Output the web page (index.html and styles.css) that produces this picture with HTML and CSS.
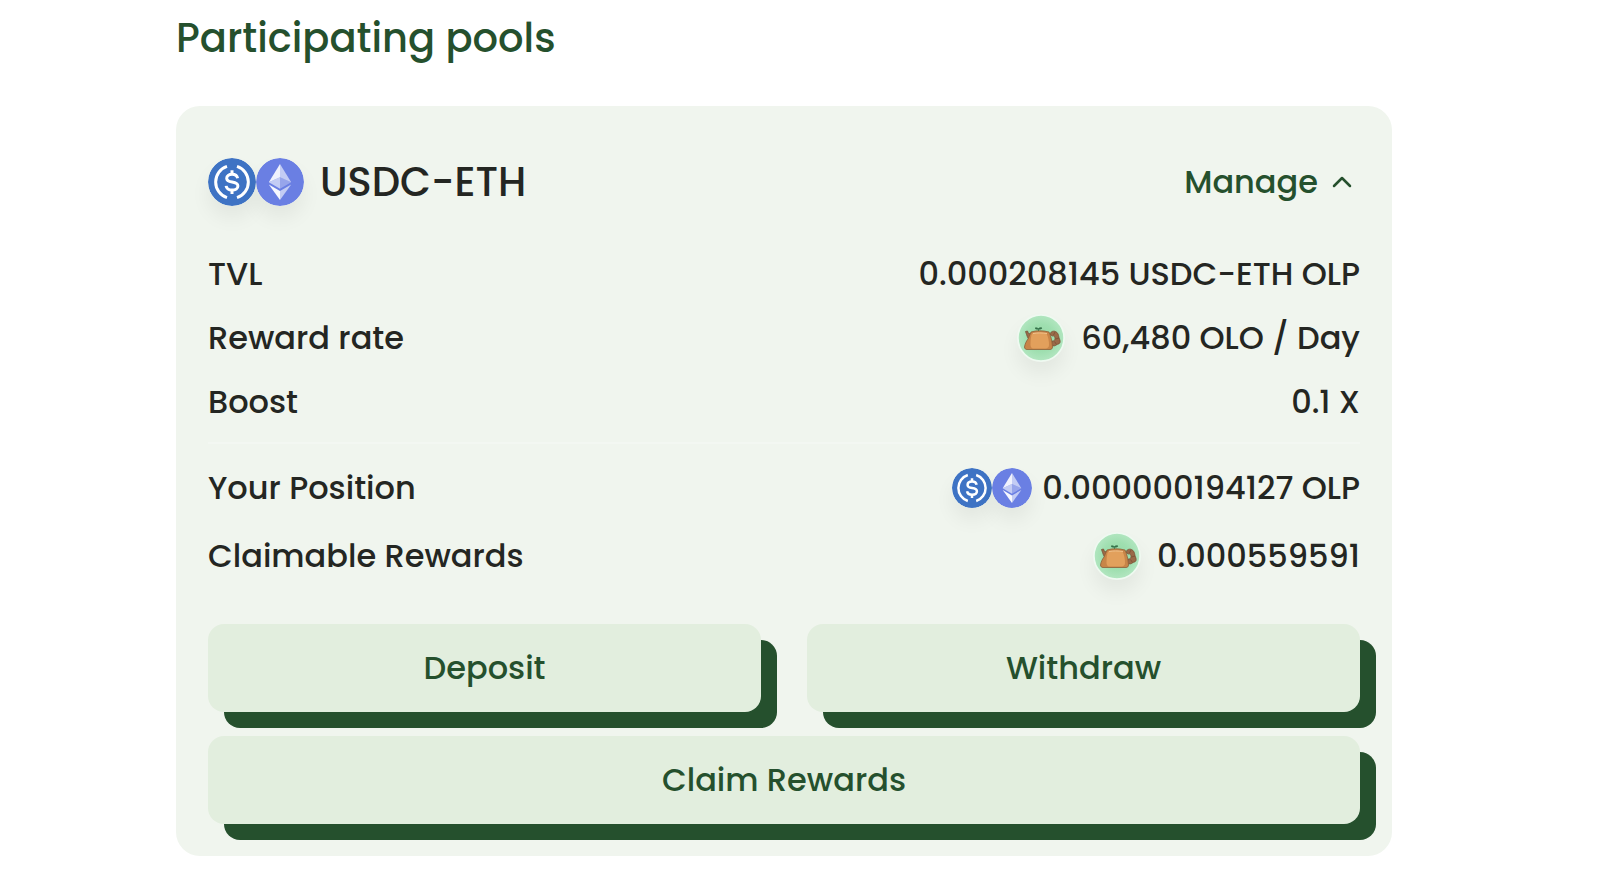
FILE: index.html
```html
<!DOCTYPE html>
<html lang="en">
<head>
    <meta charset="UTF-8">
    <meta name="viewport" content="width=device-width, initial-scale=1.0">
    <title>Participating pools</title>
    <link rel="stylesheet" href="styles.css">
</head>
<body>
    <!-- shared token icons -->
    <svg class="sprite" aria-hidden="true">
        <symbol id="usdc" viewBox="0 0 48 48">
            <circle cx="24" cy="24" r="24" fill="#3e73c4"/>
            <g fill="none" stroke="#fff" stroke-width="3">
                <path d="M19 8.4a16.4 16.4 0 0 0 0 31.200"/>
                <path d="M29 8.4a16.4 16.4 0 0 1 0 31.200"/>
                <path d="M29.600 20.200c-.5-2.600-2.500-3.900-5.500-3.900-3.200 0-5.400 1.600-5.400 4 0 2.300 1.700 3.200 5.400 3.800 4 .6 5.800 1.500 5.800 3.900 0 2.500-2.400 4.100-5.800 4.100-3.500 0-5.600-1.500-6-4.200"/>
                <path d="M24 12.300v4M24 32v4"/>
            </g>
        </symbol>
        <symbol id="eth" viewBox="0 0 48 48">
            <circle cx="24" cy="24" r="24" fill="#6a7fe3"/>
            <path fill="#fff" fill-opacity=".6" d="M24 6v13.300l11.200 5z"/>
            <path fill="#fff" fill-opacity=".9" d="M24 6L12.800 24.300l11.200-5z"/>
            <path fill="#fff" fill-opacity=".6" d="M24 32.900v9l11.200-15.500z"/>
            <path fill="#fff" fill-opacity=".95" d="M24 41.900v-9l-11.200-6.500z"/>
            <path fill="#fff" fill-opacity=".3" d="M24 30.800l11.200-6.500-11.200-5z"/>
            <path fill="#fff" fill-opacity=".6" d="M12.800 24.300L24 30.800V19.300z"/>
        </symbol>
        <symbol id="olo" viewBox="0 0 48 48">
            <radialGradient id="oloFill">
                <stop offset="0" stop-color="#93d8a5"/>
                <stop offset=".6" stop-color="#9fdfb0"/>
                <stop offset="1" stop-color="#b2e6c0"/>
            </radialGradient>
            <circle cx="24" cy="24" r="23" fill="url(#oloFill)" stroke="#eefaf1" stroke-width="1.500"/>
            <path d="M33 20.500c0-2.500 3-4 5.500-3 2.500 1 3 3.500 3.500 6 .5 2 1.500 3 1 5-.5 1.500-2 1.500-3 2-1.500 1.500-4 2-6 .5l1-4c1.500.5 3-.5 3-2.500s-1-3-2.500-2.500z" fill="#9a6a48" stroke="#7a5035" stroke-width=".8"/>
            <path d="M38 18l-1.500 3M42 24l-3.500 1M39.500 30.500l-2-3" stroke="#7a5035" stroke-width=".8"/>
            <path d="M8.500 17.500l2-.5 1 2.500 3 .5-2 5.500c-2-1-2.500-4-4-8z" fill="#9b6b48" stroke="#765036" stroke-width=".8"/>
            <path d="M14 18c5-1.600 12-1.600 18 0 2 4 3 9 3.500 15 0 1.500-1 2.500-2.500 2.500H10c-1.500 0-2.500-1-2.500-2.500.5-3.500 2-6 3.500-8z" fill="#c88548" stroke="#8c6038" stroke-width=".8"/>
            <path d="M15 19.500c4-1 11-1 14.500 0 2 4 2.500 8 2.500 11.500 0 2-1.500 3.500-3.500 3.500H17c-3 0-3.500-2-3.500-4.500 0-4 .5-7.500 1.500-10.500z" fill="#e2a05c"/>
            <path d="M16 19.500c4-.8 9-.8 14 0" fill="none" stroke="#f0c48e" stroke-width="1"/>
            <path d="M21.500 17v-2.500M21.500 15c-1-1.200-2.500-1.500-3.500-.8.8 1 2.300 1.300 3.500.8zM21.500 15c.5-1.300 2-1.700 3.500-1-.5 1-2 1.500-3.500 1z" fill="#37734b" stroke="#37734b" stroke-width=".7"/>
        </symbol>
    </svg>

    <main class="page">
        <h1 class="title">Participating pools</h1>

        <section class="pool">
            <header class="pool-header">
                <div class="tokens">
                    <svg class="icon"><use href="#usdc"/></svg>
                    <svg class="icon"><use href="#eth"/></svg>
                </div>
                <h2 class="pool-name">USDC-ETH</h2>
                <button type="button" class="manage" aria-expanded="true">
                    Manage
                    <svg class="chevron" viewBox="0 0 20 12" aria-hidden="true"><path d="M2 10l8-8 8 8"/></svg>
                </button>
            </header>

            <dl class="stats">
                <div class="row">
                    <dt>TVL</dt>
                    <dd>0.000208145 USDC-ETH OLP</dd>
                </div>
                <div class="row">
                    <dt>Reward rate</dt>
                    <dd class="reward"><svg class="icon"><use href="#olo"/></svg>60,480 OLO / Day</dd>
                </div>
                <div class="row">
                    <dt>Boost</dt>
                    <dd>0.1 X</dd>
                </div>
            </dl>

            <dl class="stats position">
                <div class="row">
                    <dt>Your Position</dt>
                    <dd>
                        <span class="tokens small">
                            <svg class="icon"><use href="#usdc"/></svg>
                            <svg class="icon"><use href="#eth"/></svg>
                        </span>
                        0.000000194127 OLP
                    </dd>
                </div>
                <div class="row">
                    <dt>Claimable Rewards</dt>
                    <dd class="reward"><svg class="icon"><use href="#olo"/></svg>0.000559591</dd>
                </div>
            </dl>

            <div class="actions">
                <button type="button" class="btn">Deposit</button>
                <button type="button" class="btn">Withdraw</button>
                <button type="button" class="btn btn-wide">Claim Rewards</button>
            </div>
        </section>
    </main>
</body>
</html>
```

FILE: styles.css
```css
* {
    box-sizing: border-box;
}

body {
    margin: 0;
    background-color: #fff;
    color: #242622;
    font-family: Poppins, Inter, sans-serif;
    font-size: 32px;
    font-weight: 500;
    line-height: 48px;
}

.sprite {
    position: absolute;
    width: 0;
    height: 0;
}

.page {
    padding: 8px 228px 23px 176px;
}

.title {
    margin: 0 0 38px;
    color: #25502d;
    font-size: 40px;
    font-weight: 500;
    line-height: 60px;
}

.pool {
    padding: 52px 32px 32px;
    background-color: #f0f5ee;
    border-radius: 24px;
}

.pool-header {
    display: flex;
    align-items: center;
    margin-bottom: 44px;
}

.pool-name {
    margin: 0 auto 0 16px;
    font-size: 40px;
    font-weight: 500;
}

.icon {
    display: block;
    width: 48px;
    height: 48px;
    border-radius: 50%;
    box-shadow: 0 12px 20px rgba(0, 0, 0, 0.06);
}

.tokens {
    display: flex;
}

.small .icon {
    width: 40px;
    height: 40px;
}

.manage {
    display: flex;
    align-items: center;
    gap: 14px;
    padding: 0 8px 0 0;
    border: none;
    background: none;
    color: #25502d;
    font: inherit;
    cursor: pointer;
}

.chevron {
    width: 20px;
    height: 12px;
    fill: none;
    stroke: currentColor;
    stroke-width: 2.5;
    stroke-linecap: round;
    stroke-linejoin: round;
}

.stats {
    display: flex;
    flex-direction: column;
    gap: 16px;
    margin: 0;
}

.position {
    gap: 20px;
    margin-top: 16px;
    padding-top: 20px;
    border-top: 2px solid #f3f7f2;
}

.row {
    display: flex;
    justify-content: space-between;
}

.row dd {
    display: flex;
    align-items: center;
    gap: 10px;
    margin: 0;
}

.row .reward {
    gap: 16px;
}

.actions {
    display: grid;
    grid-template-columns: 1fr 1fr;
    gap: 24px 46px;
    margin-top: 44px;
}

.btn {
    height: 88px;
    border: none;
    border-radius: 16px;
    background-color: #e2eede;
    box-shadow: 16px 16px 0 #25502d;
    color: #25502d;
    font: inherit;
    cursor: pointer;
}

.btn-wide {
    grid-column: 1 / -1;
}
```
